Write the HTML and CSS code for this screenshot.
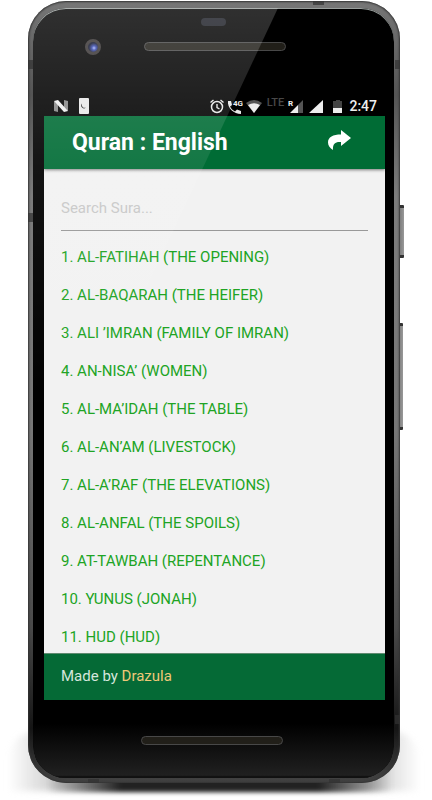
FILE: index.html
```html
<!DOCTYPE html>
<html lang="en">
<head>
  <meta charset="utf-8">
  <meta name="viewport" content="width=device-width, initial-scale=1">
  <title>Quran : English</title>
  <link rel="stylesheet" href="styles.css">
</head>
<body>
  <div class="phone">
    <div class="haze"></div>
    <div class="shadow"></div>
    <div class="side-button power"></div>
    <div class="side-button volume"></div>

    <div class="frame">
      <div class="band band-side band-top-left"></div>
      <div class="band band-side band-mid-left"></div>
      <div class="band band-side band-top-right"></div>
      <div class="band band-side band-low-right"></div>
      <div class="band band-edge band-top"></div>
      <div class="band band-edge band-bottom-left"></div>
      <div class="band band-edge band-bottom-right"></div>

      <div class="glass">
        <div class="bezel-top">
          <div class="sensor"></div>
          <div class="camera"></div>
          <div class="speaker"></div>
        </div>

        <!-- Status bar -->
        <div class="status-bar">
          <svg width="16" height="20" viewBox="0 0 16 20">
            <path d="M1 5l4 3v8l-4-1z M11 4l4 1v10l-4-3z" fill="#888"/>
            <path d="M1 5l4-1 10 11-4 1z" fill="#eee"/>
          </svg>
          <svg class="card-icon" width="10" height="20" viewBox="0 0 10 20">
            <rect y="2" width="10" height="16" rx="1" fill="#e8e8e8"/>
            <path d="M3 7.500a3 3 0 0 0 4 4a2.800 2.800 0 1 1-4-4z" fill="#222"/>
          </svg>
          <svg class="push" width="16" height="20" viewBox="0 0 16 20" fill="none" stroke="#e8e8e8">
            <circle cx="8" cy="11" r="5.500" stroke-width="1.500"/>
            <path d="M8 8v3.500l2.500 1.500M1.500 6.500l3-2.500M14.500 6.500l-3-2.500" stroke-width="1.400"/>
          </svg>
          <svg width="16" height="20" viewBox="0 0 16 20">
            <path d="M1 5h3l1 4-2 1.500c1 2 3 4 5 5l2-2 4 1.500v3C7 18 0 12 1 5z" fill="#e8e8e8"/>
            <text class="tiny" x="6" y="10">4G</text>
          </svg>
          <svg width="18" height="20" viewBox="0 0 18 20">
            <path d="M1 7Q9 1 17 7L9 17z" fill="#555"/>
            <path d="M3 9Q9 5.500 15 9L9 17z" fill="#eee"/>
          </svg>
          <span class="lte">LTE</span>
          <svg width="18" height="20" viewBox="0 0 18 20">
            <path d="M16 4v13h-5V9z" fill="#555"/>
            <path d="M11 9v8H3z" fill="#eee"/>
            <text class="tiny" x="1" y="10">R</text>
          </svg>
          <svg width="18" height="20" viewBox="0 0 18 20">
            <path d="M16 4v13H2z" fill="#eee"/>
          </svg>
          <svg width="20" height="20" viewBox="0 0 20 20">
            <path d="M6 5h3V4h4v1h2v8H6z" fill="#444"/>
            <path d="M6 12h9v5H6z" fill="#eee"/>
          </svg>
          <span class="clock">2:47</span>
        </div>

        <!-- App -->
        <div class="screen">
          <header>
            <h1>Quran : English</h1>
            <button class="share" aria-label="Share">
              <svg width="24" height="20" viewBox="0 0 24 20">
                <path d="M13 0L23 8L13 16V12C8 11.500 4.500 13 5 20C2 18.500 0 15.500 0 12.500C0 7 5 4.500 13 4.500z" fill="#fff"/>
              </svg>
            </button>
          </header>

          <main>
            <input class="search" type="text" placeholder="Search Sura..." aria-label="Search Sura">
            <ul class="suras">
              <li><a href="#">1. AL-FATIHAH (THE OPENING)</a></li>
              <li><a href="#">2. AL-BAQARAH (THE HEIFER)</a></li>
              <li><a href="#">3. ALI ’IMRAN (FAMILY OF IMRAN)</a></li>
              <li><a href="#">4. AN-NISA’ (WOMEN)</a></li>
              <li><a href="#">5. AL-MA’IDAH (THE TABLE)</a></li>
              <li><a href="#">6. AL-AN’AM (LIVESTOCK)</a></li>
              <li><a href="#">7. AL-A’RAF (THE ELEVATIONS)</a></li>
              <li><a href="#">8. AL-ANFAL (THE SPOILS)</a></li>
              <li><a href="#">9. AT-TAWBAH (REPENTANCE)</a></li>
              <li><a href="#">10. YUNUS (JONAH)</a></li>
              <li><a href="#">11. HUD (HUD)</a></li>
            </ul>
          </main>

          <footer>Made by <a href="#">Drazula</a></footer>
        </div>

        <div class="bezel-bottom">
          <div class="speaker"></div>
        </div>
        <div class="gloss"></div>
      </div>
    </div>
  </div>
</body>
</html>
```

FILE: styles.css
```css
* {
  box-sizing: border-box;
}

body {
  margin: 0;
  padding: 1px 32px 17px 28px;
  background-color: #fff;
  font-family: Roboto, sans-serif;
}

.phone {
  position: relative;
}

/* Metal frame */
.frame {
  position: relative;
  padding: 7px 6px 5px 5px;
  border-radius: 38px;
  background: linear-gradient(#777, #555 12%, #7c7c7c 25%, #777 55%, #4a4a4a 80%, #151515 93%, #444);
  box-shadow: inset 0 0 2px 1px #333;
}

.glass {
  position: relative;
  overflow: hidden;
  padding: 0 9px 0 11px;
  border-radius: 33px;
  background-color: #000;
  box-shadow: inset 0 1px 0 #9aa09e;
}

.band {
  position: absolute;
  background-color: rgba(50, 50, 50, 0.7);
}

.band-side {
  width: 5px;
  height: 9px;
}

.band-edge {
  width: 11px;
  height: 4px;
}

.band-top-left {
  top: 59px;
  left: 0;
}

.band-mid-left {
  top: 212px;
  left: 0;
}

.band-top-right {
  top: 59px;
  right: 0;
}

.band-low-right {
  bottom: 59px;
  right: 0;
}

.band-top {
  top: 0;
  right: 76px;
}

.band-bottom-left {
  bottom: 0;
  left: 60px;
}

.band-bottom-right {
  bottom: 0;
  right: 60px;
}

.side-button {
  position: absolute;
  right: -4px;
  width: 5px;
  border-top: 3px solid #333;
  border-bottom: 3px solid #333;
  border-radius: 1px;
  background: linear-gradient(90deg, #777, #999);
}

.power {
  top: 204px;
  height: 53px;
}

.volume {
  top: 322px;
  right: -3px;
  height: 107px;
}

/* Shadow on the table */
.shadow {
  position: absolute;
  left: 0;
  right: 0;
  bottom: -9px;
  height: 40px;
  background: linear-gradient(90deg, transparent 5%, #222 25%, #222 78%, transparent 98%);
  filter: blur(2px);
}

.haze {
  position: absolute;
  left: -20px;
  right: -20px;
  bottom: -8px;
  height: 60px;
  border-radius: 30px 30px 0 0;
  background: linear-gradient(90deg, transparent, #ccc 12%, #ccc 88%, transparent);
  filter: blur(3px);
}

/* Bezels */
.bezel-top {
  position: relative;
  height: 87px;
}

.sensor {
  position: absolute;
  top: 10px;
  left: 46%;
  width: 25px;
  height: 8px;
  border-radius: 4px;
  background-color: #1c1e26;
}

.camera {
  position: absolute;
  top: 31px;
  left: 41px;
  width: 16px;
  height: 16px;
  border: 3px solid #383434;
  border-radius: 50%;
  background: radial-gradient(circle at 60% 60%, #a9b8ff 0, #3a4cae 25%, #14182e 60%);
}

.speaker {
  width: 142px;
  height: 9px;
  margin: 0 auto;
  border: 1px solid #484848;
  border-radius: 5px;
  background-color: #211f19;
}

.bezel-top .speaker {
  position: relative;
  top: 34px;
}

.bezel-bottom {
  height: 78px;
  margin: 0 -9px 0 -11px;
  padding: 36px 4px 0 0;
  background: linear-gradient(#000 30%, #222);
  box-shadow: inset 0 -2px 1px #111;
}

.gloss {
  position: absolute;
  top: 0;
  left: 0;
  width: 245px;
  height: 400px;
  pointer-events: none;
  background: linear-gradient(rgba(255, 255, 255, 0.19), rgba(255, 255, 255, 0.12) 25%, rgba(255, 255, 255, 0.08) 40%, transparent);
  clip-path: polygon(0 0, 100% 0, 57px 100%, 0 100%);
}

/* Status bar */
.status-bar {
  display: flex;
  align-items: center;
  gap: 2px;
  height: 21px;
  padding: 0 8px 0 9px;
  color: #eee;
}

.status-bar svg {
  flex: none;
}

.card-icon {
  margin-left: 8px;
}

.push {
  margin-left: auto;
}

.tiny {
  font-size: 8px;
  font-weight: bold;
  fill: #eee;
}

.lte {
  width: 20px;
  padding-bottom: 5px;
  font-size: 11px;
  font-weight: 500;
  line-height: 12px;
  text-align: center;
  color: #484848;
}

.clock {
  font-size: 14px;
  font-weight: 500;
}

/* App screen */
.screen {
  background-color: #f2f2f2;
}

header {
  position: relative;
  display: flex;
  align-items: center;
  justify-content: space-between;
  height: 53px;
  padding: 0 33px 0 28px;
  background-color: #006c35;
  box-shadow: 0 1px 3px rgba(0, 0, 0, 0.5);
}

h1 {
  margin: 0;
  font-size: 23px;
  line-height: 28px;
  font-weight: bold;
  color: #fff;
}

.share {
  display: flex;
  margin-bottom: 6px;
  padding: 0;
  border: none;
  background: none;
  cursor: pointer;
}

main {
  padding: 16px 17px 6px;
}

.search {
  display: block;
  width: 100%;
  height: 46px;
  padding: 0;
  border: none;
  border-bottom: 1px solid #999;
  background: none;
  font-family: inherit;
  font-size: 15px;
  outline: none;
}

.search::placeholder {
  color: #c8c8c8;
  opacity: 1;
}

.suras {
  display: flex;
  flex-direction: column;
  gap: 18px;
  margin: 16px 0 0;
  padding: 0;
  list-style: none;
}

.suras a {
  display: block;
  font-size: 15px;
  line-height: 20px;
  color: #20a424;
  text-decoration: none;
}

footer {
  height: 47px;
  padding: 0 17px;
  border-top: 1px solid #5f8a70;
  background-color: #056a36;
  font-size: 15px;
  line-height: 44px;
  color: #d5e6dc;
}

footer a {
  color: #eec878;
  text-decoration: none;
}
```
